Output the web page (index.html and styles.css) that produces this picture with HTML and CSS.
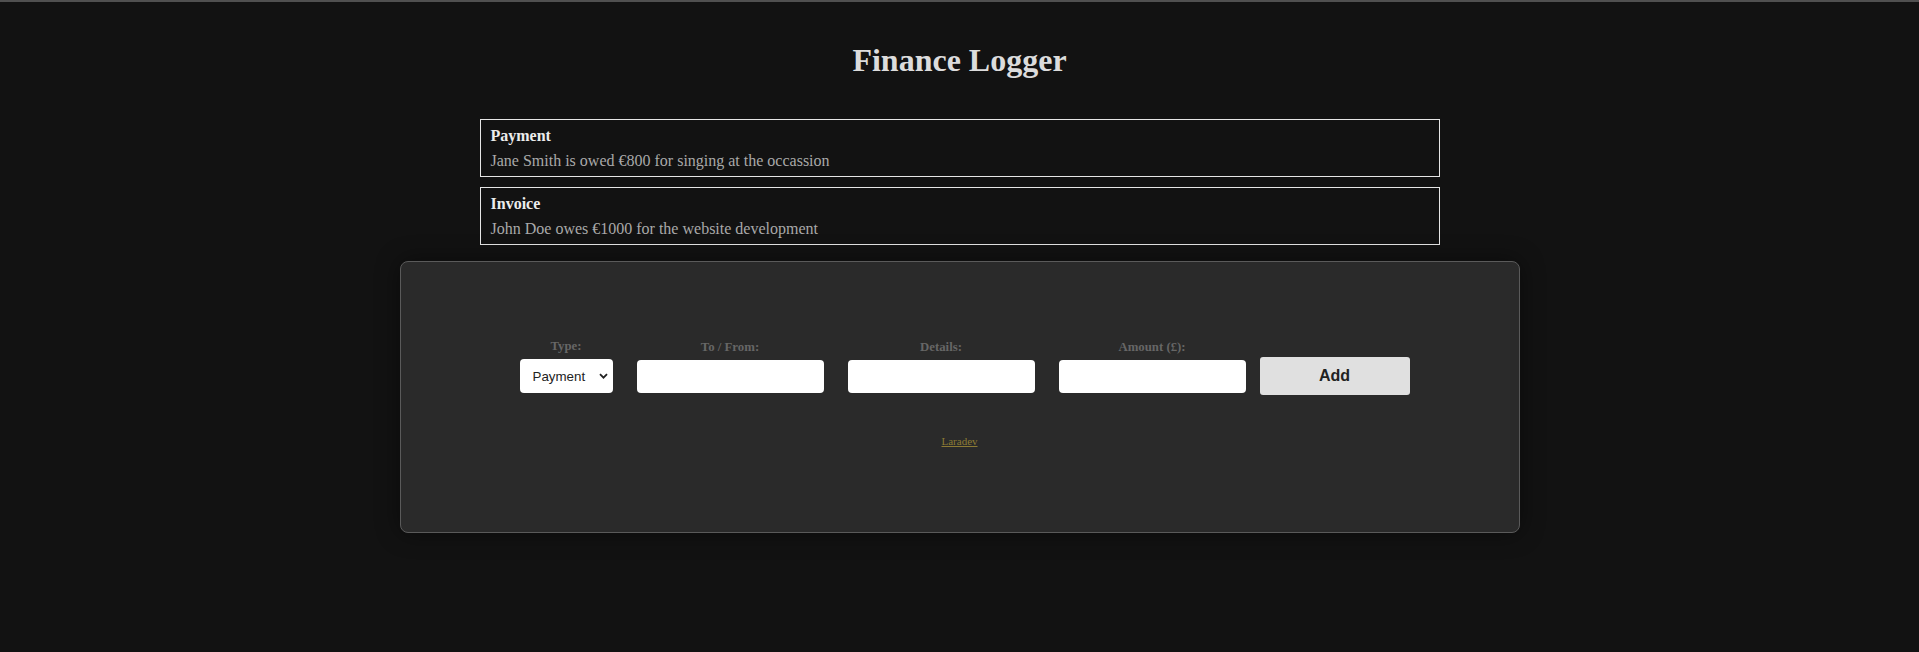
FILE: index.html
```html
<!DOCTYPE html>
<html lang="en">
<head>
<meta charset="utf-8">
<title>Finance Logger</title>
<link rel="stylesheet" href="styles.css">
</head>
<body>
<div class="topbar"></div>
<h1 class="title">Finance Logger</h1>
<ul class="items">
  <li class="item">
    <h4 class="item-title">Payment</h4>
    <p class="item-text">Jane Smith is owed €800 for singing at the occassion</p>
  </li>
  <li class="item">
    <h4 class="item-title">Invoice</h4>
    <p class="item-text">John Doe owes €1000 for the website development</p>
  </li>
</ul>
<footer class="panel">
  <form class="form">
    <div class="field field-type">
      <label class="label" for="type">Type:</label>
      <select class="select" id="type">
        <option value="payment">Payment</option>
        <option value="invoice">Invoice</option>
      </select>
    </div>
    <div class="field">
      <label class="label" for="tofrom">To / From:</label>
      <input class="input" type="text" id="tofrom">
    </div>
    <div class="field">
      <label class="label" for="details">Details:</label>
      <input class="input" type="text" id="details">
    </div>
    <div class="field">
      <label class="label" for="amount">Amount (£):</label>
      <input class="input" type="number" id="amount">
    </div>
    <button class="btn" type="button">Add</button>
  </form>
  <a class="credit" href="#">Laradev</a>
</footer>
</body>
</html>
```

FILE: styles.css
```css
html, body {
  margin: 0;
  padding: 0;
}
body {
  background: #121212;
  font-family: "Liberation Serif", "Times New Roman", serif;
  color: #ddd;
  min-height: 652px;
}
.topbar {
  height: 2px;
  background: #505050;
}
.title {
  margin: 40px 0 41px;
  font-size: 32px;
  font-weight: bold;
  text-align: center;
  color: #dcdcdc;
  line-height: 36px;
}
.items {
  list-style: none;
  margin: 0 auto;
  padding: 0;
  width: 960px;
}
.item {
  border: 1px solid #e6e6e6;
  padding: 7px 10px 6px;
  margin-bottom: 10px;
}
.item:last-child {
  margin-bottom: 0;
}
.item-title {
  margin: 0 0 7px;
  font-size: 16px;
  font-weight: bold;
  color: #ececec;
  line-height: 18px;
}
.item-text {
  margin: 0;
  font-size: 16px;
  color: #a9a9a9;
  line-height: 18px;
}
.panel {
  width: 1118px;
  margin: 16px auto 0;
  background: #2a2a2a;
  border: 1px solid #5a5a5a;
  border-radius: 8px;
  box-shadow: 0 0 24px rgba(0, 0, 0, 0.45);
  padding: 77px 0 85px;
  display: flex;
  flex-direction: column;
  align-items: center;
}
.form {
  display: flex;
  align-items: flex-end;
  justify-content: center;
  gap: 24px;
  padding-left: 10px;
  margin: 0;
}
.field {
  display: flex;
  flex-direction: column;
  align-items: center;
}
.label {
  font-size: 12.8px;
  font-weight: bold;
  color: #666;
  line-height: 14px;
  margin-bottom: 6px;
}
.select {
  -webkit-appearance: none;
  appearance: none;
  width: 93px;
  height: 34px;
  border: none;
  border-radius: 4px;
  background-color: #fff;
  background-image: url("data:image/svg+xml,%3Csvg xmlns='http://www.w3.org/2000/svg' width='9' height='6' viewBox='0 0 9 6'%3E%3Cpath d='M1 1.2l3.5 3.5 3.5-3.5' fill='none' stroke='%23222' stroke-width='1.8'/%3E%3C/svg%3E");
  background-repeat: no-repeat;
  background-position: right 5px center;
  color: #222;
  font-family: "Liberation Sans", Arial, sans-serif;
  font-size: 13.33px;
  padding: 0 18px 0 13px;
}
.input {
  width: 187px;
  height: 33px;
  box-sizing: border-box;
  border: none;
  border-radius: 4px;
  background: #fff;
  padding: 0 8px;
  font-family: "Liberation Sans", Arial, sans-serif;
  font-size: 14px;
}
.input::-webkit-outer-spin-button,
.input::-webkit-inner-spin-button {
  -webkit-appearance: none;
  margin: 0;
}
.btn {
  width: 150px;
  height: 38px;
  margin-left: -10px;
  margin-bottom: -2px;
  border: none;
  border-radius: 3px;
  background: #e0e0e0;
  color: #222;
  font-family: "Liberation Sans", Arial, sans-serif;
  font-size: 16px;
  font-weight: bold;
  cursor: pointer;
}
.credit {
  margin-top: 42px;
  font-size: 11px;
  line-height: 12px;
  color: #8c7a34;
}
```
